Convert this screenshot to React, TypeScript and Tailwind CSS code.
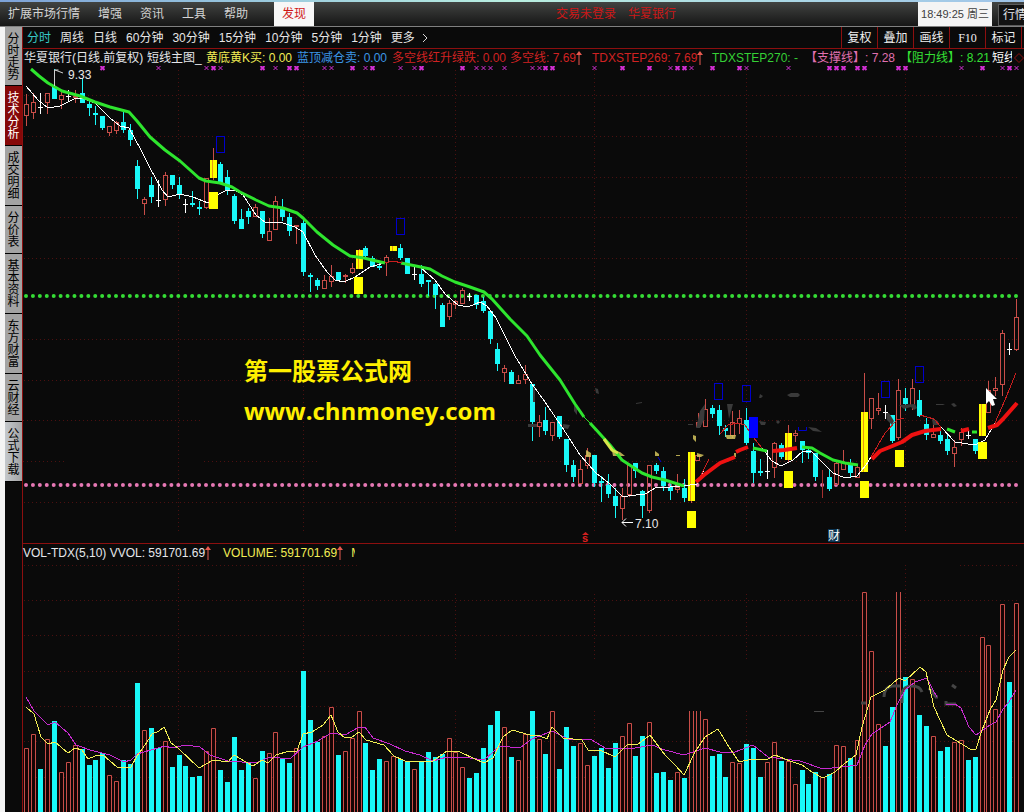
import React from "react";

type Bar = [kind: string, top: number];
type Candle = [kind: string, high: number, top: number, bottom: number, low: number];

const STEP = 6.923;
const at = (i: number) => Math.round(26.2 + i * STEP);

const volumes = (
  "r748 r734 c769 r739 c721 r772 r762 r745 c749 c765 c760 c753 r775 r781 c760 c764 c683 r730 c728 c748 r741 c767 c755 c766 " +
  "c777 c776 r751 r728 c770 c782 c737 c770 c763 r778 c751 r753 r732 c758 c763 r748 c671 c720 c742 r736 r707 c755 r751 r738 " +
  "r711 c743 c770 c759 r761 r756 c759 c762 r769 c761 c752 c757 c754 r738 r752 r767 c778 c773 c748 c725 c711 r727 c757 r760 " +
  "r734 c711 r739 c754 r711 c769 c727 c746 r743 r765 c756 c748 c768 c743 r736 r723 c756 c736 r722 c773 c772 c780 r772 c778 " +
  "o711 o711 r719 c756 c754 c777 r762 r763 c744 c748 c777 r762 r742 c761 r761 r784 c770 c784 c772 r777 c774 r745 r746 c758 " +
  "r740 r592 r651 r724 c746 c707 o592 c677 r679 c715 c726 r736 c751 c747 r742 r740 c760 c757 r637 r645 r709 r604 c682 r603"
)
  .split(" ")
  .map((s): Bar => [s[0], Number(s.slice(1))]);

const candles = (
  "r94,104,116,126 r93,102,113,119 w93,107,107,114 r93,93,103,114 c69,87,99,99 r92,95,100,109 w90,96,96,102 r90,96,98,103 " +
  "c78,93,103,103 c100,104,108,116 t106,113,114,125 c116,116,128,130 r126,126,133,136 r121,122,131,134 c112,122,130,133 c124,130,140,146 " +
  "c160,166,189,199 r197,199,204,215 c177,185,197,203 w180,200,200,207 r172,175,200,206 c175,175,185,189 c177,185,194,199 w199,204,204,213 " +
  "t191,203,204,207 t201,207,208,215 r178,178,208,209 y148,160,178,180 c162,164,183,183 c170,177,190,195 c194,196,221,224 c209,219,229,229 " +
  "c208,211,217,224 r204,207,217,217 c211,211,234,238 r218,231,241,241 r196,201,230,230 c199,209,217,221 c213,217,231,236 r225,225,226,244 " +
  "c220,223,272,276 t273,275,276,292 c278,280,286,290 r275,280,289,289 r265,276,282,287 c272,272,280,280 r274,275,277,283 r263,268,273,274 " +
  "y249,250,269,269 c246,248,256,258 c256,258,267,267 t263,266,267,270 r255,257,263,276 y246,246,251,251 c244,248,258,260 c258,258,274,274 " +
  "w267,274,274,280 c265,274,284,287 t280,280,281,296 c283,284,295,309 c303,305,327,327 r300,303,317,320 r300,301,305,309 r288,290,304,304 " +
  "w293,296,296,301 c295,295,305,309 c297,301,311,313 c311,311,339,344 c343,349,364,371 r365,368,373,382 c370,372,384,384 r375,380,384,384 " +
  "r365,374,380,384 c384,384,422,441 r415,422,427,437 c407,420,431,435 r422,422,436,441 c416,416,437,439 c439,439,465,472 c460,465,477,482 " +
  "r460,469,484,484 r448,455,466,469 c455,455,483,487 t476,481,482,502 c474,485,494,498 c488,496,506,518 r488,496,509,520 r465,465,495,497 " +
  "c463,463,471,478 c490,491,506,518 r465,465,511,513 c463,465,471,474 c467,471,486,491 c484,487,491,500 r474,487,490,493 c479,488,498,502 " +
  "y452,452,501,503 r413,422,427,427 r399,409,427,427 c405,408,414,418 c405,410,426,435 c425,428,431,437 r411,422,436,438 r410,418,424,434 " +
  "c408,420,443,445 c443,451,473,483 t459,471,472,476 w450,471,471,479 r442,443,468,478 c443,445,457,459 y425,433,460,462 r430,433,436,442 " +
  "c441,441,450,463 c448,450,453,459 c453,453,477,481 l470,470,498,498 c470,477,489,491 r461,463,485,485 r450,462,470,470 c459,463,473,477 " +
  "r465,467,478,478 y373,412,472,472 r398,398,419,429 r393,408,411,415 w405,412,412,419 c415,415,441,443 r379,390,438,440 c388,398,404,411 " +
  "r379,388,407,410 c390,400,416,417 c418,424,435,440 r419,434,438,438 c430,435,441,444 c434,439,451,455 r440,447,454,467 r428,432,440,446 " +
  "w430,435,435,439 c439,439,451,454 y404,404,436,436 r381,390,413,413 r377,388,391,396 r330,333,385,396 w343,349,349,355 r299,317,350,351"
)
  .split(" ")
  .map((s): Candle => {
    const [a, b, c, d] = s.slice(1).split(",").map(Number);
    return [s[0], a, b, c, d];
  });

const crosses =
  "11b 19 26 27b 28 34b 36 38b 39b 43 44 47b 49 50b 54 56 57b 63b 65 66 67 69 73 74 75b 76b 82 86b 90b 93 94b 95b 96 99b 103b 104 110 116b 117b 118b 120b 121b 126b 127b 135 138b 141 142b 143".split(" ");

const green = [
  "31,69 39,76 48,83 62,91 80,96 95,102 110,107 129,112 137,121 150,137 165,150 180,161 199,178 206,181 220,183 232,187 240,192 256,200 269,206 283,208 297,213 303,218 317,232 333,245 350,256 364,258 372,260 385,263",
  "401,263 416,266 430,269 442,276 455,282 470,287 484,292 492,299 510,319 527,336 540,355 560,380 575,404 584,417",
  "590,423 600,434 610,445 622,460 642,473 652,477 665,480 684,486",
  "753,448 767,451",
  "802,447 812,448 820,453 833,460 845,463 858,465",
  "947,429 955,432",
  "972,432 977,432",
];
const red = [
  "696,482 704,475 720,463 735,457",
  "736,452 740,450 748,447",
  "773,451 784,450 797,448",
  "872,459 880,451 890,447 902,442 912,435 925,431 941,429",
  "961,431 969,429",
  "988,428 997,425 1003,419 1017,403",
];
const thinRed = [
  "385,263 393,261 402,263",
  "697,483 709,459",
  "720,434 728,425 737,423 745,425 753,437 762,448",
  "871,457 885,433 897,420 904,418",
  "920,415 934,419 941,427",
  "995,423 1005,400 1016,373",
];
const white = [
  "26,86 38,100 48,108 60,106 74,99 82,98 95,103 110,118 120,126 129,128 141,150 150,168 162,190 168,197 180,194 193,197 208,203 219,194 227,190 235,190 243,195 256,215 266,223 280,222 295,227 303,232 315,255 327,272 335,280 344,282 355,277 370,267 384,263",
  "421,268 435,280 445,294 458,305 468,307 480,302 487,306 496,318 515,356 532,384 545,402 562,427 580,455 596,473 610,484 622,496 628,496 645,494 657,487 670,487 690,485 697,484 704,470",
  "762,448 772,461 781,466 793,460 803,451 812,452 822,462 833,473 845,478 857,476 866,465 871,457",
  "941,427 955,442 975,445 985,440 995,423",
];
const volYellow =
  "26,707 34,714 41,737 48,744 55,742 68,753 75,748 82,750 88,759 95,756 103,755 117,767 131,767 137,756 145,745 152,734 159,731 164,727 171,743 178,748 199,768 213,760 228,762 234,755 253,766 262,760 268,763 276,755 289,751 297,751 303,734 312,732 323,725 331,715 338,732 345,738 352,737 359,732 366,740 384,745 394,756 405,761 433,761 447,751 460,752 475,759 484,763 493,758 503,737 512,730 530,735 540,736 547,739 552,727 563,738 582,740 588,750 600,750 615,757 628,744 637,745 650,735 665,755 675,765 684,775 695,752 705,737 718,729 729,747 739,762 752,759 768,759 775,755 790,761 802,765 812,772 823,778 835,772 845,763 856,755 862,727 871,697 885,690 899,678 905,681 920,667 926,672 934,707 947,735 960,743 970,749 976,749 982,730 990,710 996,700 1003,670 1009,657 1016,650";
const volMagenta = [
  "26,697 34,711 48,725 55,722 68,733 76,745 90,750 110,755 124,762 131,760 137,754 165,746 172,748 185,745 200,747 210,755 228,761 256,763 270,757 290,759 303,747 318,741 331,733 345,735 359,727 365,727 373,738 390,744 405,751 420,755 433,761 447,757 470,758 484,760 500,746 520,748 532,739 552,731 570,740 590,739 607,749 635,748 652,745 665,750 684,755 705,748 720,752 735,752 753,745 768,757 800,761 823,769 850,766 857,765 865,745 872,734 890,722 897,705 905,690 915,682 927,678 932,688 937,697",
  "946,704 955,704 961,708 969,727 976,735 990,725 996,722 1003,709 1009,702 1016,690",
];

const blueBoxes = [[216, 136], [396, 218], [714, 383], [742, 385], [881, 381], [915, 366]];
const yellowBlocks = [[209, 192], [354, 277], [687, 511], [784, 471], [860, 481], [895, 450], [978, 442]];
const gridX = [178, 303, 455, 594, 746, 905];

function Lines({ sets, color, width }: { sets: string[]; color: string; width: number }) {
  return (
    <g fill="none" stroke={color} strokeWidth={width} strokeLinejoin="round" shapeRendering={width === 1 ? "crispEdges" : "auto"}>
      {sets.map((p) => (
        <polyline key={p} points={p} />
      ))}
    </g>
  );
}

function CandleMark({ i, c }: { i: number; c: Candle }) {
  const [kind, high, top, bottom, low] = c;
  const x = at(i);
  if (kind === "r")
    return (
      <g fill="none" stroke="#c84d48">
        <path d={`M${x + 0.5} ${high}V${top}M${x + 0.5} ${bottom}V${low}`} />
        <rect x={x - 1.5} y={top + 0.5} width="4" height={Math.max(1, bottom - top - 1)} />
      </g>
    );
  if (kind === "l") return <rect x={x} y={high} width="1" height={low - high} fill="#a53030" />;
  const color = kind === "w" ? "#ffffff" : kind === "y" ? "#ffff00" : "#19f8f8";
  const isCross = kind === "w" || kind === "t";
  return (
    <g fill={color}>
      <rect x={x} y={high} width="1" height={low - high} fill={kind === "y" ? "#c84d48" : color} />
      {isCross ? (
        <rect x={x - 2} y={top} width="5" height={kind === "w" ? 1 : 2} />
      ) : (
        <rect x={kind === "y" ? x - 3 : x - 2} y={top} width={kind === "y" ? 7 : 5} height={bottom - top} />
      )}
      {kind === "y" && <rect x={x - 1} y={top} width="1" height={bottom - top} fill="#e89a10" />}
    </g>
  );
}

function PriceChart() {
  return (
    <svg viewBox="23 66 1001 477" className="block w-full" role="img" aria-label="日线K线图">
      <g stroke="#4c1010" strokeDasharray="1 3">
        {[95, 136, 177, 217, 258, 339, 380, 420, 461, 502].map((y) => (
          <path key={y} d={y === 461 ? `M23 461.5H64M204 461.5H320M528 461.5H1019` : y === 420 ? "M23 420.5H200M500 420.5H1019" : `M24 ${y}.5H1019`} />
        ))}
        {gridX.map((x) => (
          <path key={x} d={`M${x}.5 70V532`} />
        ))}
      </g>
      <g fill="none" strokeLinecap="round" strokeWidth="4" strokeDasharray="0 6.923">
        <path d="M26 296H1018" stroke="#35dc35" />
        <path d="M26 485H1018" stroke="#e678b4" />
      </g>
      <g stroke="#d22fd2" fill="none">
        {crosses.map((s) => {
          const x = at(parseInt(s)) + 0.5;
          return <path key={s} strokeWidth={s.endsWith("b") ? 2 : 1} d={`M${x - 2} 66l4 4M${x + 2} 66l-4 4`} />;
        })}
      </g>
      {candles.map((c, i) => (
        <CandleMark key={i} i={i} c={c} />
      ))}
      <rect x="695.5" y="455.5" width="4" height="5" fill="none" stroke="#c84d48" />
      <g fill="#3a3a3a">
        <path d="M595 388l3 1 1 5-3-1zM574 405l3 4v6l-3-4zM636 403l6-1v1l-6 1zM528 424h9v3h-9zM533 386h2v16h-2zM563 424l7 1-2 4-5-1z" />
        <path d="M700 411l5-7-1 16-4 8h-4zM722 404h5l2 15 4-15h-5zM760 394l3 2-2 2h-2zM787 395l4-2h7l2 2-2 2h-8zM759 421l7 1-1 3h-4zM776 422l2-2 2 2-2 2zM808 427l8 1 6 4-9-1zM688 424h5v1h-5zM886 413h3l5 8-2 4-5-5zM899 405l16-1 2 4-3 2-3-3-7 2zM932 419l6 2 1 4h-6zM936 404h9l-2 1h-7zM951 404l3-1 3 3-3 1z" />
      </g>
      <g fill="#d3c45d" opacity="0.85">
        <path d="M586 450l5 3v4h-5zM612 451l8 1 5 4h-12zM655 451l4 3v2h-4zM676 455h4v1h-4zM693 435l3 1v6l-3-3zM697 453l7 2-3 2h-4zM725 435h11l-1 4h-8zM734 453h2v4h-2z" />
      </g>
      <Lines sets={white} color="#ffffff" width={1} />
      <Lines sets={green} color="#2ee52e" width={3} />
      <path d="M584 417l6 6" stroke="#2ee52e" />
      <path d="M604 439l8 11 6 3" stroke="#d8e64a" strokeWidth="3" fill="none" />
      <Lines sets={thinRed} color="#c81e1e" width={1} />
      <Lines sets={red} color="#ee1111" width={4} />
      <g fill="none" stroke="#0000cc">
        {blueBoxes.map(([x, y]) => (
          <rect key={x} x={x + 0.5} y={y + 0.5} width="8" height="16" />
        ))}
        <path d="M798.5 427v3.500h8V427M658 457l3 5" />
      </g>
      <rect x="749" y="417" width="9" height="21" fill="#0000ff" />
      <g fill="#ffff00">
        {yellowBlocks.map(([x, y]) => (
          <rect key={x} x={x} y={y} width="9" height="17" />
        ))}
      </g>
      <path d="M54.500 86V70h4M55 70l8 3" stroke="#cfcfcf" fill="none" />
      <path d="M622 522.500h11M622 522.500l4-4M622 522.500l4 4" stroke="#ffffff" fill="none" />
      <g fill="#e8e8e8" fontSize="12" fontFamily="Liberation Sans, sans-serif">
        <text x="68" y="79">9.33</text>
        <text x="635" y="528">7.10</text>
      </g>
      <path d="M585.500 532l-3.500 3h7z" fill="#d02020" />
      <text x="582" y="542" fill="#e02020" fontSize="11" fontWeight="700" fontFamily="Liberation Sans, sans-serif">s</text>
      <rect x="828" y="529" width="12" height="13" fill="#0c3552" />
      <text x="828" y="540" fill="#ffffff" fontSize="12" fontFamily="Noto Sans CJK SC, sans-serif">财</text>
      <path d="M986 388v16l3-3 3 5 3-1-2-6h4z" fill="#ffffff" />
    </svg>
  );
}

function VolumeChart() {
  return (
    <svg viewBox="23 561 1001 251" className="block w-full" role="img" aria-label="成交量">
      <g stroke="#4c1010" strokeDasharray="1 3">
        <path d="M24 565.5H358M960 565.5H1019M24 600.5H1019M24 635.5H1019M24 671.5H358M861 671.5H1019M24 706.5H358M920 706.5H1019M24 741.5H1019M24 777.5H1019" />
        {gridX.map((x) => (
          <path key={x} d={x > 400 && x < 800 ? `M${x}.5 594V660M${x}.5 711V812` : `M${x}.5 565V812`} />
        ))}
      </g>
      {volumes.map(([kind, top], i) => {
        const x = at(i);
        if (kind === "c") return <rect key={i} x={x - 2} y={top} width="5" height={812 - top} fill="#19f8f8" />;
        return (
          <path
            key={i}
            d={kind === "o" ? `M${x - 1.5} 813V${top}M${x + 2.5} ${top}V813` : `M${x - 1.5} 813V${top + 0.5}H${x + 2.5}V813`}
            fill={kind === "o" ? "none" : "#160404"}
            stroke="#c84d48"
          />
        );
      })}
      <g fill="none" stroke="#454545" strokeWidth="3">
        <path d="M861 703h5M884 697q0-10 8-11h8M902 703v-10q2-7 10-7t10 6M929 688l7 9M935 697h3M952 685l4 3M946 701v3h10" />
        <path d="M814 711.500h10" strokeWidth="1" />
      </g>
      <Lines sets={volMagenta} color="#c82bd0" width={1} />
      <Lines sets={[volYellow]} color="#f2ee55" width={1} />
    </svg>
  );
}

function UpArrow() {
  return (
    <svg viewBox="0 0 6 14" className="inline-block h-3.5 w-1.5 shrink-0" aria-hidden="true">
      <path d="M3 0L0 4h6z" fill="#e85a50" />
      <path d="M3 3v11" stroke="#e85a50" />
    </svg>
  );
}

const menus = ["扩展市场行情", "增强", "资讯", "工具", "帮助"];
const periods = ["分时", "周线", "日线", "60分钟", "30分钟", "15分钟", "10分钟", "5分钟", "1分钟", "更多"];
const sideTabs = ["分时走势", "技术分析", "成交明细", "分价表", "基本资料", "东方财富", "云财经", "公式下载"];

export default function App() {
  return (
    <div className="flex min-h-screen flex-col overflow-hidden bg-[#0a0a0a] font-['Liberation_Sans','Noto_Sans_CJK_SC',sans-serif] text-xs text-gray-200">
      <div className="h-0.5 bg-linear-to-r from-[#7da2d8] via-[#b9efe0] to-[#9fc3e8]" />
      <header className="flex h-[25px] items-stretch border-b border-[#808080] bg-linear-to-b from-[#424442] to-[#161616] whitespace-nowrap">
        <nav className="flex items-center gap-[18px] pl-2">
          {menus.map((m) => (
            <button key={m} type="button" className="text-xs text-[#d4d4d4]">{m}</button>
          ))}
        </nav>
        <button type="button" className="ml-[26px] w-10 bg-[#f7f7f7] text-xs text-[#d01818]">发现</button>
        <div className="flex flex-1 items-center justify-center gap-3 text-[#cc1717]">
          <span>交易未登录</span>
          <span>华夏银行</span>
        </div>
        <time className="flex w-[74px] items-center justify-center bg-[#f4f4f4] text-[11px] text-[#404040]">18:49:25 周三</time>
        <button type="button" className="mt-0.5 ml-1.5 w-[26px] overflow-hidden border border-r-0 border-[#5c5c5c] bg-[#121212] pl-1 text-left text-xs text-gray-200">行情</button>
      </header>
      <div className="flex flex-1 items-stretch">
        <aside className="w-[5px] shrink-0 bg-[#f4f4f4]" />
        <nav className="w-[17px] shrink-0">
          {sideTabs.map((t) => (
            <button
              key={t}
              type="button"
              className={`block w-full border-b border-black px-0.5 pt-1.5 pb-[5px] text-center text-xs leading-3 break-all first:pb-1 ${
                t === "技术分析" ? "bg-[#860808] text-white" : t === "公式下载" ? "bg-linear-to-r from-[#c4c8cc] to-[#a3a3a3] text-black" : "bg-[#a3a3a3] text-black"
              }`}
            >
              {t}
            </button>
          ))}
        </nav>
        <main className="min-w-0 flex-1 border-l border-[#8c0f0f]">
          <div className="flex h-[22px] items-stretch justify-between border-b border-[#8c0f0f] whitespace-nowrap">
            <div className="flex items-center gap-[9px] pl-1">
              {periods.map((p) => (
                <button
                  key={p}
                  type="button"
                  className={p === "分时" ? "text-xs text-[#37c8c8]" : "text-xs text-[#e6e6e6]"}
                >
                  {p}
                </button>
              ))}
              <svg viewBox="0 0 6 8" className="-ml-0.5 h-2 w-1.5" fill="none" stroke="#d8d8d8" aria-hidden="true">
                <path d="M1 0l4 4-4 4" />
              </svg>
            </div>
            <div className="mr-0.5 flex border-r border-[#8c0f0f]">
              {["复权", "叠加", "画线", "F10", "标记"].map((b) => (
                <button key={b} type="button" className="w-9 border-l border-[#8c0f0f] font-['Liberation_Serif','Noto_Sans_CJK_SC',serif] text-xs text-[#f0f0f0]">{b}</button>
              ))}
            </div>
          </div>
          <div className="grid h-[17px] grid-cols-[123px_59px_91px_95px_118px_82px_120px_93px_95px_92px_1fr] items-center overflow-hidden pl-px whitespace-nowrap">
            <span>华夏银行(日线.前复权)</span>
            <span>短线主图_</span>
            <span className="text-[#f2ee55]">黄底黄K买: 0.00</span>
            <span className="text-[#3c96e6]">蓝顶减仓卖: 0.00</span>
            <span className="text-[#d02222]">多空线红升绿跌: 0.00</span>
            <span className="text-[#d02222]">多空线: 7.69<UpArrow /></span>
            <span className="text-[#d02222]">TDXSTEP269: 7.69<UpArrow /></span>
            <span className="text-[#35d035]">TDXSTEP270: -</span>
            <span className="text-[#e070b0]">【支撑线】: 7.28</span>
            <span className="text-[#35e035]">【阻力线】: 8.21</span>
            <span className="flex items-center overflow-hidden text-white">
              <span className="w-5 overflow-hidden">短线</span>
              <svg viewBox="0 0 10 10" className="ml-0.5 size-2.5 shrink-0" aria-hidden="true">
                <path d="M5 .5L9.500 5 5 9.500.5 5z" fill="none" stroke="#8c0f0f" />
              </svg>
            </span>
          </div>
          <div className="relative">
            <PriceChart />
            <div className="absolute top-[285px] left-[221px] font-['Open_Sans','Noto_Sans_CJK_SC',sans-serif] text-2xl leading-10 font-bold text-[#fff000]">
              <p>第一股票公式网</p>
              <a href="http://www.chnmoney.com">www.chnmoney.com</a>
            </div>
          </div>
          <div className="flex h-[18px] items-center border-t border-[#8c0f0f] whitespace-nowrap">
            <span>VOL-TDX(5,10) VVOL: 591701.69<UpArrow /></span>
            <span className="ml-3 text-[#f2ee55]">VOLUME: 591701.69<UpArrow /></span>
            <span className="ml-2 w-1 overflow-hidden text-[#f2ee55]">M</span>
          </div>
          <VolumeChart />
        </main>
      </div>
    </div>
  );
}
